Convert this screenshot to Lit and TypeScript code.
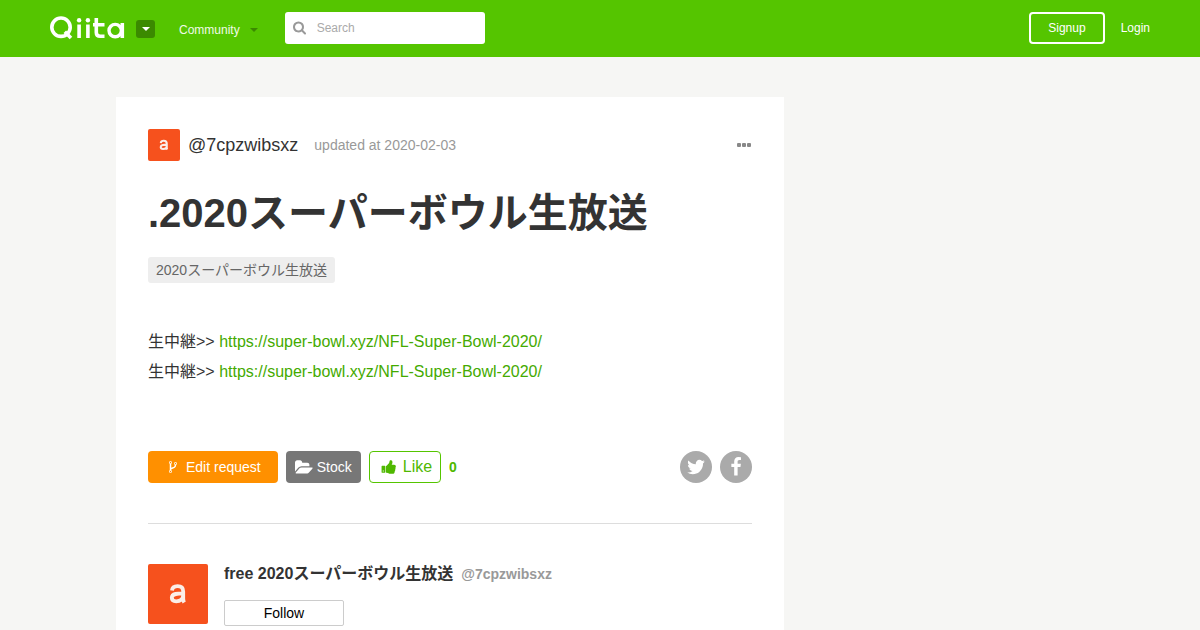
import { LitElement, html, css, svg } from "lit";
import { customElement } from "lit/decorators.js";

const faIcon = (name: string, box: string, path: string) => html`
  <svg class="icon ${name}" viewBox=${box} aria-hidden="true">${svg`<path d=${path} />`}</svg>
`;

const SEARCH =
  "M1152 832q0-185-131.500-316.500t-316.500-131.500-316.500 131.500-131.500 316.500 131.500 316.500 316.500 131.500 316.500-131.500 131.500-316.500zm512 832q0 52-38 90t-90 38q-54 0-90-38l-343-342q-179 124-399 124-143 0-273.500-55.500t-225-150-150-225-55.500-273.500 55.500-273.500 150-225 225-150 273.500-55.500 273.500 55.500 225 150 150 225 55.500 273.500q0 220-124 399l343 343q37 37 37 90z";
const FORK =
  "M672 1472q0-40-28-68t-68-28-68 28-28 68 28 68 68 28 68-28 28-68zm0-1152q0-40-28-68t-68-28-68 28-28 68 28 68 68 28 68-28 28-68zm640 128q0-40-28-68t-68-28-68 28-28 68 28 68 68 28 68-28 28-68zm96 0q0 52-26 96.500t-70 69.500q-2 287-226 414-67 38-203 81-128 40-169.500 71t-41.500 100v26q44 25 70 69.500t26 96.500q0 80-56 136t-136 56-136-56-56-136q0-52 26-96.500t70-69.500v-820q-44-25-70-69.500t-26-96.500q0-80 56-136t136-56 136 56 56 136q0 52-26 96.500t-70 69.500v497q54-26 154-57 55-17 87.500-29.500t70.500-31 59-39.500 40.500-51 28-69.500 8.500-91.500q-44-25-70-69.500t-26-96.500q0-80 56-136t136-56 136 56 56 136z";
const FOLDER =
  "M1879 952q0 31-31 66l-336 396q-43 51-120.500 86.500t-143.500 35.500h-1088q-34 0-60.500-13t-26.500-43q0-31 31-66l336-396q43-51 120.500-86.500t143.500-35.500h1088q34 0 60.500 13t26.500 43zm-343-344v160h-832q-94 0-197 47.500t-164 119.500l-337 396-5 6q0-4-.5-12.500t-.5-12.500v-960q0-92 66-158t158-66h320q92 0 158 66t66 158v32h544q92 0 158 66t66 158z";
const THUMB =
  "M320 1344q0-26-19-45t-45-19q-27 0-45.500 19t-18.500 45q0 27 18.500 45.500t45.500 18.500q26 0 45-18.500t19-45.500zm160-512v640q0 26-19 45t-45 19h-288q-26 0-45-19t-19-45v-640q0-26 19-45t45-19h288q26 0 45 19t19 45zm1184 0q0 86-55 149 15 44 15 76 3 76-43 137 17 56 0 117-15 57-54 94 9 112-49 181-64 76-197 78h-129q-66 0-144-15.500t-121.500-29-120.500-39.500q-123-43-158-44-26-1-45-19.500t-19-44.500v-641q0-25 18-43.500t43-20.500q24-2 76-59t101-121q68-87 101-120 18-18 31-48t17.500-48.500 13.500-60.500q7-39 12.500-61t19.500-52 34-50q19-19 45-19 46 0 82.500 10.500t60 26 40 40.500 24 45 12 50 5 45 .5 39q0 38-9.500 76t-19 60-27.500 56q-3 6-10 18t-11 22-8 24h277q78 0 135 57t57 135z";
const TWITTER =
  "M1684 408q-67 98-162 167 1 14 1 42 0 130-38 259.500t-115.500 248.500-184.500 210.500-258 146-323 54.500q-271 0-496-145 35 4 78 4 225 0 401-138-105-2-188-64.500t-114-159.500q33 5 61 5 43 0 85-11-112-23-185.500-111.500t-73.500-205.500v-4q68 38 146 41-66-44-105-115t-39-154q0-88 44-163 121 149 294.500 238.500t371.500 99.500q-8-38-8-74 0-134 94.500-228.500t228.500-94.500q140 0 236 102 109-21 205-78-37 115-142 178 93-10 186-50z";
const FACEBOOK =
  "M1343 12v264h-157q-86 0-116 36t-30 108v189h293l-39 296h-254v759h-306v-759h-255v-296h255v-218q0-186 104-288.500t277-102.500q147 0 228 12z";

@customElement("user-avatar")
class UserAvatar extends LitElement {
  static styles = css`
    :host {
      display: block;
      flex: none;
      width: 32px;
    }
    :host([large]) {
      width: 60px;
    }
    .tile {
      display: block;
      width: 100%;
      border-radius: 2px;
    }
  `;
  render() {
    return html`<svg class="tile" viewBox="0 0 60 60" role="img" aria-label="avatar">
      <rect width="60" height="60" fill="#f6511d" />
      <path
        d="M24 26.500C24.200 23.500 26.500 22.200 29.600 22.200C33.500 22.200 35.200 24 35.200 27.500V34.500Q35.200 37 36.200 38.600M35.200 29.300C30 29.300 23.800 29.300 23.800 33.800C23.800 36 25.500 37.300 28.200 37.300C32.300 37.300 35.200 35 35.200 31.300"
        fill="none"
        stroke="#fbeee8"
        stroke-width="3.800"
      />
    </svg>`;
  }
}

@customElement("app-root")
class AppRoot extends LitElement {
  static styles = css`
    :host {
      display: block;
      min-height: 100vh;
      background: #f6f6f4;
      color: #333;
      font-family: "Liberation Sans", "Noto Sans CJK JP", sans-serif;
      font-size: 14px;
      line-height: 20px;
    }
    * {
      box-sizing: border-box;
    }
    a {
      color: inherit;
      text-decoration: none;
    }
    button {
      font: inherit;
      cursor: pointer;
    }
    .icon {
      display: block;
      flex: none;
      width: 14px;
      height: 14px;
      fill: currentColor;
    }
    .header {
      display: flex;
      align-items: center;
      height: 57px;
      padding: 0 50px;
      background: #55c500;
      color: #fff;
      font-size: 12px;
    }
    .logo {
      display: block;
      width: 75px;
      height: 24px;
    }
    .switch {
      display: grid;
      place-items: center;
      width: 19px;
      height: 18px;
      margin-left: 11px;
      padding: 0;
      border: 0;
      border-radius: 3px;
      background: #3b8a00;
    }
    .caret {
      width: 0;
      border: 4px solid transparent;
      border-top-color: #fff;
      border-bottom: 0;
    }
    .community {
      display: flex;
      align-items: center;
      gap: 10px;
      margin: 0 27px 0 24px;
      padding: 2px 0 0;
      border: 0;
      background: none;
      color: #f0fae8;
    }
    .community .caret {
      border-top-color: #3b8a00;
    }
    .search {
      display: flex;
      align-items: center;
      gap: 10px;
      width: 200px;
      height: 32px;
      padding: 0 8px;
      border-radius: 3px;
      background: #fff;
      color: #999;
    }
    .field {
      flex: 1;
      min-width: 0;
      padding: 0;
      border: 0;
      outline: 0;
      background: none;
      color: #333;
      font: inherit;
    }
    .field::placeholder {
      color: #aaa;
    }
    .session {
      display: flex;
      align-items: center;
      gap: 16px;
      margin-left: auto;
    }
    .home,
    .search,
    .session {
      margin-bottom: 1px;
    }
    .signup {
      padding: 4px 17px;
      border: 2px solid #fff;
      border-radius: 4px;
    }
    .page {
      display: grid;
      grid-template-columns: minmax(0, 668fr) minmax(0, 300fr);
      max-width: 968px;
      margin: 0 auto;
      padding-top: 40px;
    }
    .article {
      padding: 32px;
      background: #fff;
    }
    .byline {
      display: flex;
      align-items: center;
      gap: 8px;
    }
    .author {
      font-size: 18px;
    }
    .date {
      margin-left: 8px;
      color: #999;
    }
    .more {
      display: flex;
      gap: 1px;
      margin-left: auto;
      padding: 8px 1px;
      border: 0;
      background: none;
    }
    .dot {
      width: 4px;
      height: 4px;
      border-radius: 1px;
      background: #888;
    }
    .title {
      margin: 24px 0 16px;
      font-size: 40px;
      line-height: 56px;
    }
    .tag {
      display: inline-block;
      padding: 3px 8px;
      border-radius: 3px;
      background: #eee;
      color: #666;
    }
    .body {
      margin: 44px 0 64px;
      font-size: 16px;
      line-height: 30px;
    }
    .line {
      margin: 0;
    }
    .link {
      color: #4a0;
    }
    .actions {
      display: flex;
      align-items: center;
      gap: 8px;
      padding-bottom: 40px;
      border-bottom: 1px solid #ddd;
    }
    .action {
      display: flex;
      align-items: center;
      height: 32px;
      padding: 0 8px;
      border: 1px solid transparent;
      border-radius: 4px;
      color: #fff;
    }
    .edit {
      gap: 6px;
      padding: 0 16px 0 17px;
      background: #ff9000;
    }
    .stock {
      gap: 4px;
      background: #777;
    }
    .like {
      gap: 6px;
      padding: 0 8px 0 11px;
      border-color: #55c500;
      background: #fff;
      color: #4fb800;
      font-size: 16px;
    }
    .folder {
      width: 18px;
      height: 17px;
    }
    .thumb {
      width: 16px;
      height: 16px;
    }
    .count {
      color: #4fb800;
      font-weight: bold;
    }
    .share {
      display: flex;
      gap: 8px;
      margin-left: auto;
    }
    .round {
      display: grid;
      place-items: center;
      width: 32px;
      height: 32px;
      border-radius: 50%;
      background: #aaa;
      color: #fff;
    }
    .round .icon {
      width: 20px;
      height: 20px;
    }
    .profile {
      display: flex;
      gap: 16px;
      padding-top: 40px;
    }
    .names {
      display: flex;
      align-items: baseline;
      gap: 8px;
      margin-bottom: 16px;
      font-weight: bold;
    }
    .display {
      font-size: 16px;
    }
    .handle {
      color: #999;
    }
    .follow {
      width: 120px;
      height: 26px;
      padding: 0;
      border: 1px solid #ccc;
      border-radius: 2px;
      background: #fff;
      color: #000;
    }
  `;

  render() {
    const url = "https://super-bowl.xyz/NFL-Super-Bowl-2020/";
    return html`
      <header class="header">
        <a class="home" href="#" aria-label="Qiita">
          <svg class="logo" viewBox="0 0 75 24" fill="none" stroke="#fff" stroke-width="3.600" aria-hidden="true">
            <circle cx="11" cy="11.200" r="9.200" />
            <path d="M14.800 15.800L21 22M29.100 8.500V22M37.900 8.500V22M46.300 2V16.500Q46.300 20.300 50.300 20.300H54.500M43 8.700H54.500M72.300 7V22" />
            <circle cx="65.200" cy="14.600" r="6.200" stroke-width="3.400" />
            <g fill="#fff" stroke="none">
              <circle cx="29.100" cy="4.200" r="2.200" />
              <circle cx="37.900" cy="4.200" r="2.200" />
            </g>
          </svg>
        </a>
        <button class="switch" aria-label="Services"><span class="caret"></span></button>
        <button class="community">Community <span class="caret"></span></button>
        <label class="search">
          ${faIcon("glass", "0 128 1792 1664", SEARCH)}
          <input class="field" type="search" placeholder="Search" aria-label="Search" />
        </label>
        <nav class="session">
          <a class="signup" href="#">Signup</a>
          <a href="#">Login</a>
        </nav>
      </header>
      <main class="page">
        <article class="article">
          <div class="byline">
            <user-avatar></user-avatar>
            <a class="author" href="#">@7cpzwibsxz</a>
            <span class="date">updated at 2020-02-03</span>
            <button class="more" aria-label="More">
              <span class="dot"></span><span class="dot"></span><span class="dot"></span>
            </button>
          </div>
          <h1 class="title">.2020スーパーボウル生放送</h1>
          <a class="tag" href="#">2020スーパーボウル生放送</a>
          <div class="body">
            <p class="line">生中継&gt;&gt; <a class="link" href=${url}>${url}</a></p>
            <p class="line">生中継&gt;&gt; <a class="link" href=${url}>${url}</a></p>
          </div>
          <div class="actions">
            <button class="action edit">${faIcon("fork", "0 0 1792 1792", FORK)} Edit request</button>
            <button class="action stock">${faIcon("folder", "0 0 1920 1792", FOLDER)} Stock</button>
            <button class="action like">${faIcon("thumb", "0 64 1792 1664", THUMB)} Like</button>
            <span class="count">0</span>
            <div class="share">
              <a class="round" href="#" aria-label="Twitter">${faIcon("bird", "0 0 1792 1792", TWITTER)}</a>
              <a class="round" href="#" aria-label="Facebook">${faIcon("face", "0 0 1792 1792", FACEBOOK)}</a>
            </div>
          </div>
          <section class="profile">
            <user-avatar large></user-avatar>
            <div>
              <div class="names">
                <a class="display" href="#">free 2020スーパーボウル生放送</a>
                <a class="handle" href="#">@7cpzwibsxz</a>
              </div>
              <button class="follow">Follow</button>
            </div>
          </section>
        </article>
      </main>
    `;
  }
}
